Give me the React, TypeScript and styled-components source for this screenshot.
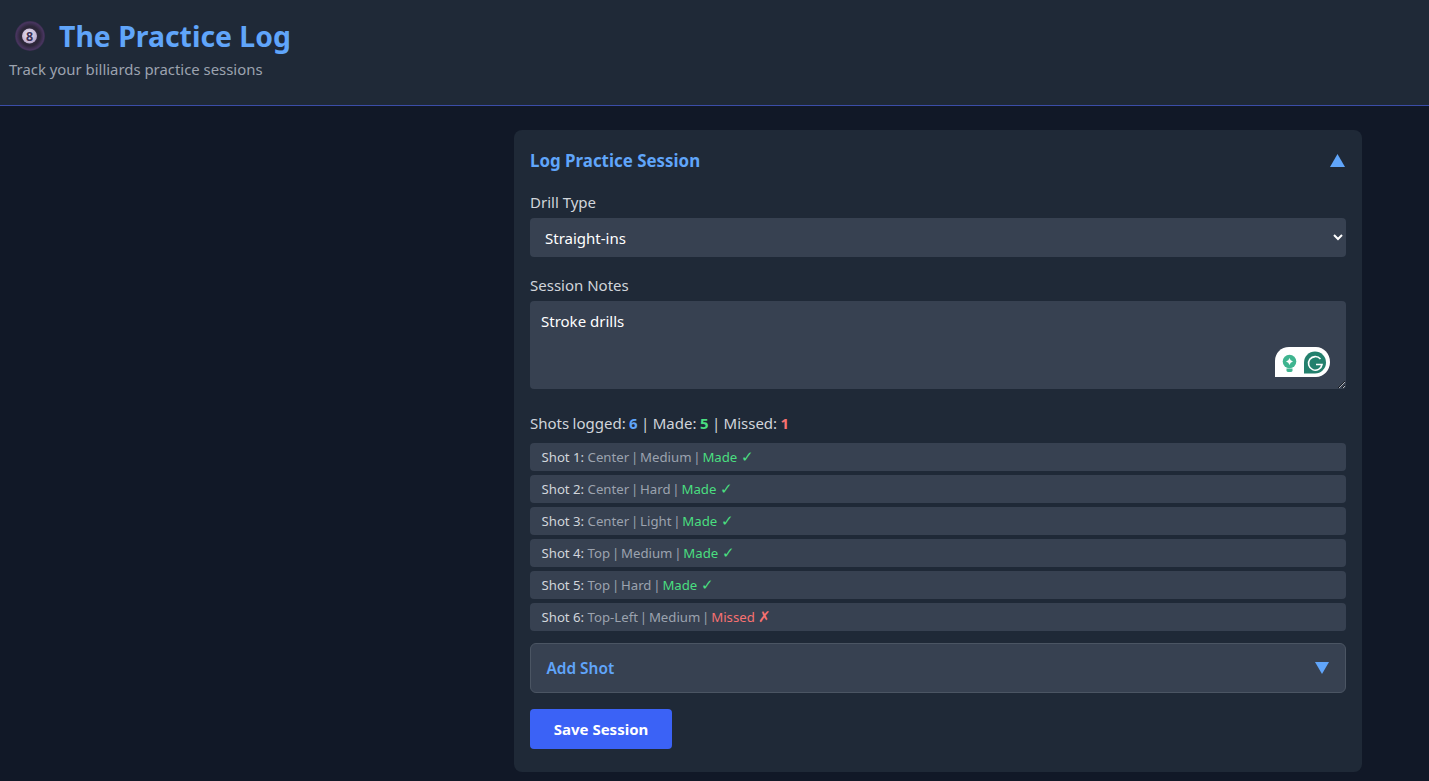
import React from "react";
import styled, { createGlobalStyle } from "styled-components";

const Global = createGlobalStyle`
  html, body { margin: 0; padding: 0; background: #111827; overflow: hidden; }
  body { font-family: "Noto Sans", "Open Sans", sans-serif; color: #e5e7eb; }
  * { box-sizing: border-box; }
`;

const Page = styled.div`
  min-height: 781px;
  display: flex;
  flex-direction: column;
`;
const Header = styled.header`
  height: 106px;
  padding: 17px 9px 0;
  background: #1f2937;
  border-bottom: 1px solid #3b4da8;
`;
const TitleRow = styled.div`
  display: flex;
  align-items: center;
  gap: 14px;
  padding-left: 6px;
  height: 38px;
`;
const Title = styled.h1`
  margin: 0;
  font-size: 28.4px;
  font-weight: 700;
  color: #60a5fa;
  line-height: 38px;
`;
const Subtitle = styled.p`
  margin: 3px 0 0;
  font-size: 14.9px;
  line-height: 22px;
  color: #9ca3af;
`;
const Layout = styled.main`
  display: grid;
  grid-template-columns: 1fr 848px;
  padding: 24px 67px 0 0;
`;
const Card = styled.section`
  grid-column: 2;
  height: 642px;
  background: #1f2937;
  border-radius: 8px;
  padding: 16px;
  display: flex;
  flex-direction: column;
`;
const CardHead = styled.div`
  height: 29px;
  margin-bottom: 17px;
  display: flex;
  align-items: center;
  justify-content: space-between;
`;
const CardTitle = styled.h2`
  margin: 0;
  font-size: 16.900px;
  font-weight: 700;
  color: #60a5fa;
`;
const CaretUp = styled.svg`
  display: block;
  margin-right: 1px;
`;
const CaretDown = styled.svg`
  display: block;
`;
const Label = styled.label`
  display: block;
  height: 20px;
  line-height: 20px;
  margin-bottom: 6px;
  font-size: 15px;
  color: #d1d5db;
`;
const Select = styled.select`
  display: block;
  width: 100%;
  height: 39px;
  margin-bottom: 18px;
  padding: 0 11px;
  background: #374151;
  color: #fff;
  border: none;
  border-radius: 4px;
  font: inherit;
  font-size: 15px;
`;
const NotesWrap = styled.div`
  position: relative;
  height: 88px;
  margin-bottom: 24px;
`;
const Notes = styled.textarea`
  display: block;
  width: 100%;
  height: 88px;
  padding: 10px 11px;
  background: #374151;
  color: #fff;
  border: none;
  border-radius: 4px;
  font: inherit;
  font-size: 15px;
  line-height: 20px;
  resize: vertical;
`;
const Grammarly = styled.svg`
  position: absolute;
  right: 15px;
  bottom: 12px;
`;
const Summary = styled.div`
  height: 20px;
  line-height: 20px;
  margin-bottom: 10px;
  font-size: 15px;
  word-spacing: -0.5px;
  color: #d1d5db;
`;
const Count = styled.strong<{ $tone: string }>`
  color: ${(p) => p.$tone};
`;
const ShotList = styled.ul`
  list-style: none;
  margin: 0 0 12px;
  padding: 0;
  display: flex;
  flex-direction: column;
  gap: 4px;
`;
const Shot = styled.li`
  height: 28px;
  line-height: 28px;
  padding: 0 11.500px;
  background: #374151;
  border-radius: 4px;
  font-size: 13.200px;
  color: #9ca3af;
`;
const ShotName = styled.span`
  color: #d1d5db;
`;
const ShotSpec = styled.span`
  word-spacing: -1.6px;
`;
const Result = styled.span<{ $made: boolean }>`
  color: ${(p) => (p.$made ? "#4ade80" : "#f87171")};
`;
const Mark = styled.span`
  font-size: 15px;
  font-weight: 400;
  line-height: 1;
`;
const AddShot = styled.div`
  height: 50px;
  margin-bottom: 16px;
  padding: 0 16px 0 15.500px;
  display: flex;
  align-items: center;
  justify-content: space-between;
  background: #374151;
  border: 1px solid #4b5563;
  border-radius: 6px;
  color: #60a5fa;
  font-size: 15.400px;
  font-weight: 600;
`;
const SaveButton = styled.button`
  align-self: flex-start;
  width: 142px;
  height: 40px;
  background: #3b62f6;
  border: none;
  border-radius: 4px;
  color: #fff;
  font: inherit;
  font-size: 15px;
  font-weight: 700;
`;

const Ball = () => (
  <svg width="30" height="30" viewBox="0 0 30 30">
    <defs>
      <radialGradient id="ballFill" cx="50%" cy="50%" r="50%">
        <stop offset="0%" stopColor="#3a3048" />
        <stop offset="65%" stopColor="#2c2638" />
        <stop offset="92%" stopColor="#48355f" />
        <stop offset="100%" stopColor="#372c4c" />
      </radialGradient>
      <radialGradient id="ballFace" cx="45%" cy="40%" r="60%">
        <stop offset="0%" stopColor="#ece6f2" />
        <stop offset="100%" stopColor="#b9a9cc" />
      </radialGradient>
    </defs>
    <circle cx="15" cy="15" r="15" fill="url(#ballFill)" />
    <circle cx="14.5" cy="15" r="7.500" fill="url(#ballFace)" />
    <text x="14.500" y="19.500" textAnchor="middle" fontSize="12.500" fontWeight="700" fill="#3a2d52" fontFamily="Noto Sans, sans-serif">8</text>
  </svg>
);

const shots: { name: string; spec: string; made: boolean }[] = [
  { name: "Shot 1:", spec: "Center | Medium | ", made: true },
  { name: "Shot 2:", spec: "Center | Hard | ", made: true },
  { name: "Shot 3:", spec: "Center | Light | ", made: true },
  { name: "Shot 4:", spec: "Top | Medium | ", made: true },
  { name: "Shot 5:", spec: "Top | Hard | ", made: true },
  { name: "Shot 6:", spec: "Top-Left | Medium | ", made: false },
];

export default function App() {
  return (
    <Page>
      <Global />
      <Header>
        <TitleRow>
          <Ball />
          <Title>The Practice Log</Title>
        </TitleRow>
        <Subtitle>Track your billiards practice sessions</Subtitle>
      </Header>
      <Layout>
        <Card>
          <CardHead>
            <CardTitle>Log Practice Session</CardTitle>
            <CaretUp width="15" height="13" viewBox="0 0 15 13"><path d="M7.5 0L15 13H0z" fill="#60a5fa" /></CaretUp>
          </CardHead>
          <Label>Drill Type</Label>
          <Select defaultValue="Straight-ins">
            <option>Straight-ins</option>
          </Select>
          <Label>Session Notes</Label>
          <NotesWrap>
            <Notes defaultValue="Stroke drills" spellCheck={false} />
            <Grammarly width="56" height="30" viewBox="0 0 56 30">
              <path d="M0 30V14C0 6 6 0 14 0H41C49 0 55 7 55 15S49 30 41 30z" fill="#fff" />
              <circle cx="14.500" cy="14.500" r="6.800" fill="#3fb48f" />
              <path d="M11.500 21.500h6v2.500a2 2 0 0 1-2 1h-2a2 2 0 0 1-2-1z" fill="#3fb48f" />
              <path d="M14.500 11l1.200 2.300 2.300 1.200-2.300 1.200-1.200 2.300-1.200-2.300-2.300-1.200 2.300-1.200z" fill="#fff" />
              <path d="M29 26.500V15.500a11 11 0 1 1 11 11z" fill="#23806d" />
              <path d="M45.500 12A6.800 6.800 0 1 0 47 17.500h-6" fill="none" stroke="#fff" strokeWidth="1.600" />
            </Grammarly>
          </NotesWrap>
          <Summary>
            Shots logged: <Count $tone="#60a5fa">6</Count> | Made: <Count $tone="#4ade80">5</Count> | Missed: <Count $tone="#f87171">1</Count>
          </Summary>
          <ShotList>
            {shots.map((s) => (
              <Shot key={s.name}>
                <ShotName>{s.name}</ShotName> <ShotSpec>{s.spec}</ShotSpec>
                <Result $made={s.made}>{s.made ? "Made" : "Missed"} <Mark>{s.made ? "✓" : "✗"}</Mark></Result>
              </Shot>
            ))}
          </ShotList>
          <AddShot>
            Add Shot
            <CaretDown width="14" height="12" viewBox="0 0 14 12"><path d="M0 0H14L7 12z" fill="#60a5fa" /></CaretDown>
          </AddShot>
          <SaveButton>Save Session</SaveButton>
        </Card>
      </Layout>
    </Page>
  );
}
